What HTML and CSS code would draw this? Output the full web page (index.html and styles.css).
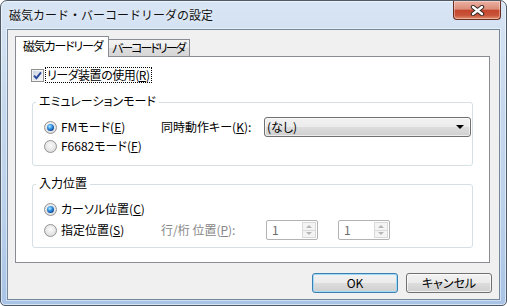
FILE: index.html
```html
<!DOCTYPE html>
<html lang="ja">
<head>
  <meta charset="UTF-8">
  <title>磁気カード・バーコードリーダの設定</title>
  <link rel="stylesheet" href="styles.css">
</head>
<body>
  <div class="window">
    <div class="titlebar">
      <div class="title">磁気カード・バーコードリーダの設定</div>
      <div class="close-btn">
        <svg width="15" height="11" viewBox="0 0 15 11">
          <path d="M3 2 L12 9 M12 2 L3 9" stroke="#3a2b29" stroke-width="4.4" stroke-linecap="round" fill="none"/>
          <path d="M3 2 L12 9 M12 2 L3 9" stroke="#fff" stroke-width="2.3" stroke-linecap="round" fill="none"/>
        </svg>
      </div>
    </div>

    <div class="client">
      <div class="tabs">
        <div class="tab active">磁気カードリーダ</div>
        <div class="tab">バーコードリーダ</div>
      </div>

      <div class="panel">
        <div class="check-row">
          <span class="checkbox">
            <svg width="9" height="9" viewBox="0 0 9 9">
              <path d="M1 4.6 L3.4 7.2 L8 1.4" stroke="#2c4a9a" stroke-width="1.9" fill="none"/>
            </svg>
          </span>
          <span class="focus">リーダ装置の使用(<u>R</u>)</span>
        </div>

        <div class="group emu">
          <div class="group-title">エミュレーションモード</div>
          <div class="row tall first">
            <div class="option"><span class="radio on"></span>FMモード(<u>E</u>)</div>
            <span class="field-label key">同時動作キー(<u>K</u>):</span>
            <div class="select"><span>(なし)</span><span class="arrow"></span></div>
          </div>
          <div class="row second">
            <div class="option"><span class="radio"></span>F6682モード(<u>F</u>)</div>
          </div>
        </div>

        <div class="group pos">
          <div class="group-title">入力位置</div>
          <div class="row first">
            <div class="option"><span class="radio on"></span>カーソル位置(<u>C</u>)</div>
          </div>
          <div class="row tall second">
            <div class="option"><span class="radio"></span>指定位置(<u>S</u>)</div>
            <span class="field-label where disabled">行/桁 位置(<u>P</u>):</span>
            <div class="spin">
              <span class="spin-val">1</span>
              <span class="spin-btns"><span class="up"></span><span class="down"></span></span>
            </div>
            <div class="spin">
              <span class="spin-val">1</span>
              <span class="spin-btns"><span class="up"></span><span class="down"></span></span>
            </div>
          </div>
        </div>
      </div>

      <div class="buttons">
        <div class="btn default">OK</div>
        <div class="btn">キャンセル</div>
      </div>
    </div>
  </div>
</body>
</html>
```

FILE: styles.css
```css
* {
  box-sizing: border-box;
}

body {
  margin: 0;
  font-family: "Noto Sans CJK JP", sans-serif;
  font-size: 12px;
  color: #000;
  background: #fff;
  white-space: nowrap;
}

u {
  text-decoration: underline;
  text-underline-offset: 1px;
}

/* window frame */
.window {
  width: 507px;
  height: 306px;
  display: flex;
  flex-direction: column;
  padding: 0 6px 5px;
  border: 1px solid #4f5a67;
  border-radius: 7px 7px 5px 5px;
  background: linear-gradient(180deg, #d8e5f4 0%, #c6d8ee 35%, #bbd1eb 70%, #a8c3e6 100%);
  box-shadow: inset 0 0 0 1px rgba(255, 255, 255, 0.55);
  overflow: hidden;
}

.titlebar {
  height: 28px;
  margin: 0 -6px;
  padding: 0 5px 0 8px;
  display: flex;
  align-items: flex-start;
}

.title {
  padding-top: 7px;
  line-height: 14px;
  color: #111;
  text-shadow: 0 0 5px rgba(255, 255, 255, 0.8);
}

.close-btn {
  margin-left: auto;
  width: 48px;
  height: 19px;
  display: flex;
  align-items: center;
  justify-content: center;
  border: 1px solid #6b2c22;
  border-top: none;
  border-radius: 0 0 4px 4px;
  background: linear-gradient(180deg, #ebb0a2 0%, #dc8d79 45%, #c4462d 52%, #c9543b 80%, #e1926f 100%);
  box-shadow: inset 0 0 0 1px rgba(255, 255, 255, 0.35);
}

.client {
  height: 271px;
  padding: 6px 7px 0;
  border: 1px solid #75879a;
  background: #f0f0f0;
  box-shadow: 0 0 0 1px rgba(255, 255, 255, 0.45);
  font-feature-settings: "palt" 1;
}

/* tabs */
.tabs {
  height: 20px;
  display: flex;
  align-items: flex-end;
}

.tab {
  width: 82px;
  height: 17px;
  margin-left: -1px;
  padding: 1px 0 0 3px;
  line-height: 14px;
  letter-spacing: -2px;
  border: 1px solid #898c95;
  border-bottom: none;
  background: linear-gradient(180deg, #f4f4f4 0%, #ebebeb 50%, #dedede 51%, #d6d6d6 100%);
}

.tab.active {
  position: relative;
  width: 94px;
  height: 21px;
  margin: 0 0 -1px 0;
  padding: 2px 0 0 7px;
  letter-spacing: -1.2px;
  background: #fff;
}

.panel {
  width: 475px;
  height: 207px;
  padding: 10px 16px 0;
  border: 1px solid #898c95;
  background: #fff;
}

/* checkbox */
.check-row {
  height: 16px;
  margin-left: -1px;
  display: flex;
  align-items: center;
}

.checkbox {
  width: 13px;
  height: 13px;
  margin-right: 1px;
  display: flex;
  align-items: center;
  justify-content: center;
  border: 1px solid #8e8f8f;
  background: linear-gradient(135deg, #c7cfe0 0%, #e6e9f1 60%, #f7f7f7 100%);
  box-shadow: inset 0 0 0 1px #f4f4f4;
}

.focus {
  height: 16px;
  padding: 0 2px 0 1px;
  line-height: 14px;
  letter-spacing: -0.5px;
  border: 1px dotted #000;
}

/* group boxes */
.group {
  border: 1px solid #d5dfe5;
  border-radius: 3px;
  padding: 0 0 11px 11px;
}

.group.emu {
  margin-top: 19px;
}

.group.pos {
  margin-top: 18px;
  padding-bottom: 7px;
}

.group-title {
  width: max-content;
  margin: -9px 0 0 -8px;
  padding: 0 3px;
  line-height: 14px;
  background: #fff;
}

.row {
  height: 16px;
  display: flex;
  align-items: center;
  line-height: 14px;
}

.row.tall {
  height: 20px;
}

.emu .row.first {
  margin-top: 9px;
}

.emu .row.second {
  margin-top: 1px;
}

.pos .row.first {
  margin-top: 11px;
}

.pos .row.second {
  margin-top: 3px;
}

.option {
  width: 117px;
  display: flex;
  align-items: center;
}

.radio {
  width: 13px;
  height: 13px;
  margin-right: 4px;
  display: flex;
  align-items: center;
  justify-content: center;
  border: 1px solid #939393;
  border-radius: 50%;
  background: radial-gradient(circle at 50% 40%, #fbfbfb 0%, #eaeaea 45%, #d2d2d2 100%);
}

.radio.on::after {
  content: "";
  width: 7px;
  height: 7px;
  border-radius: 50%;
  background: radial-gradient(circle at 40% 35%, #b8ecfd 0%, #3b9ae6 35%, #0d4ea3 70%, #0a3170 100%);
}

.field-label.key {
  width: 103px;
}

.field-label.where {
  width: 105px;
}

.disabled {
  color: #878787;
}

/* dropdown */
.select {
  width: 207px;
  height: 20px;
  padding: 0 6px 0 2px;
  display: flex;
  align-items: center;
  justify-content: space-between;
  border: 1px solid #707070;
  border-radius: 3px;
  background: linear-gradient(180deg, #f2f2f2 0%, #ebebeb 50%, #dddddd 51%, #cfcfcf 100%);
  box-shadow: inset 0 0 0 1px rgba(255, 255, 255, 0.6);
}

.arrow {
  width: 0;
  height: 0;
  border-left: 4px solid transparent;
  border-right: 4px solid transparent;
  border-top: 4px solid #000;
}

/* spin boxes (disabled) */
.spin {
  width: 52px;
  height: 20px;
  padding: 1px;
  display: flex;
  justify-content: space-between;
  border: 1px solid #b3b3b3;
  border-radius: 2px;
  background: #fff;
}

.spin + .spin {
  margin-left: 20px;
}

.spin-val {
  padding-left: 4px;
  line-height: 16px;
  color: #6d6d6d;
}

.spin-btns {
  width: 14px;
  display: flex;
  flex-direction: column;
}

.spin-btns span {
  flex: 1;
  display: flex;
  align-items: center;
  justify-content: center;
  border: 1px solid #d9d9d9;
  background: #f4f4f4;
}

.spin-btns span + span {
  border-top: none;
}

.spin-btns .up::after,
.spin-btns .down::after {
  content: "";
  width: 0;
  height: 0;
  border-left: 3px solid transparent;
  border-right: 3px solid transparent;
}

.spin-btns .up::after {
  border-bottom: 3px solid #b5b5b5;
}

.spin-btns .down::after {
  border-top: 3px solid #b5b5b5;
}

/* buttons */
.buttons {
  margin-top: 10px;
  display: flex;
  justify-content: flex-end;
  gap: 8px;
}

.btn {
  width: 86px;
  height: 20px;
  display: flex;
  align-items: center;
  justify-content: center;
  line-height: 14px;
  border: 1px solid #707070;
  border-radius: 3px;
  background: linear-gradient(180deg, #f2f2f2 0%, #ebebeb 50%, #dddddd 51%, #cfcfcf 100%);
  box-shadow: inset 0 0 0 1px rgba(255, 255, 255, 0.7);
}

.btn.default {
  border-color: #3c7fb1;
  box-shadow: inset 0 0 0 1px #9fd9f6;
}
```
